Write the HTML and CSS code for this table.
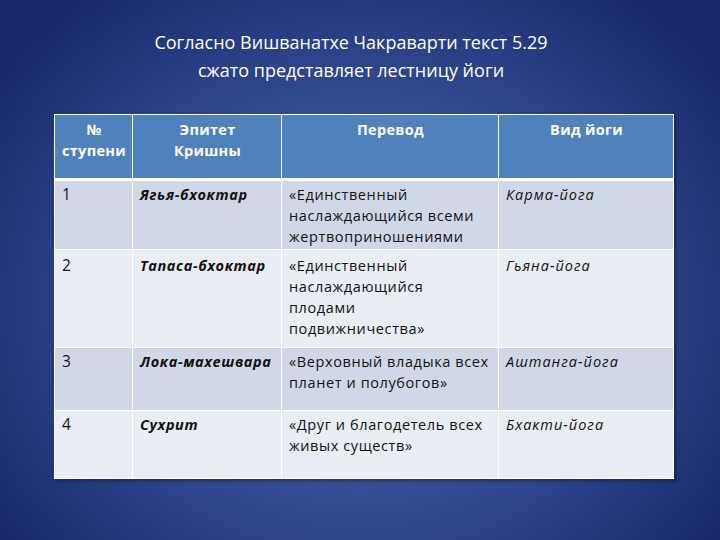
FILE: index.html
```html
<!DOCTYPE html>
<html lang="ru">
<head>
<meta charset="utf-8">
<link rel="stylesheet" href="styles.css">
</head>
<body>
<div class="slide">
  <h1 class="title">Согласно Вишванатхе Чакраварти текст 5.29<br>сжато представляет лестницу йоги</h1>
  <table class="grid">
    <colgroup>
      <col class="c1"><col class="c2"><col class="c3"><col class="c4">
    </colgroup>
    <thead>
      <tr class="head">
        <th>№<br>ступени</th>
        <th>Эпитет<br>Кришны</th>
        <th>Перевод</th>
        <th>Вид йоги</th>
      </tr>
    </thead>
    <tbody>
      <tr class="r1 dark">
        <td class="num">1</td>
        <td class="epi">Ягья-бхоктар</td>
        <td>«Единственный наслаждающийся всеми жертвоприношениями</td>
        <td class="kind">Карма-йога</td>
      </tr>
      <tr class="r2 light">
        <td class="num">2</td>
        <td class="epi">Тапаса-бхоктар</td>
        <td>«Единственный<br>наслаждающийся<br>плодами<br>подвижничества»</td>
        <td class="kind">Гьяна-йога</td>
      </tr>
      <tr class="r3 dark">
        <td class="num">3</td>
        <td class="epi">Лока-махешвара</td>
        <td>«Верховный владыка всех планет и полубогов»</td>
        <td class="kind">Аштанга-йога</td>
      </tr>
      <tr class="r4 light">
        <td class="num">4</td>
        <td class="epi">Сухрит</td>
        <td>«Друг и благодетель всех живых существ»</td>
        <td class="kind">Бхакти-йога</td>
      </tr>
    </tbody>
  </table>
</div>
</body>
</html>
```

FILE: styles.css
```css
html, body {
  margin: 0;
  padding: 0;
}

.slide {
  width: 720px;
  height: 540px;
  overflow: hidden;
  box-sizing: border-box;
  padding-top: 28px;
  background: radial-gradient(ellipse 62% 72% at 50% 56%, #4e67a9 0%, #3f579b 35%, #293e84 70%, #172969 100%);
  font-family: "Open Sans", "Noto Sans", sans-serif;
}

.title {
  margin: 0;
  padding-right: 18px;
  font-weight: normal;
  font-size: 18px;
  line-height: 28px;
  color: #ffffff;
  text-align: center;
}

.grid {
  margin: 30px 0 0 54px;
  width: 619px;
  border-collapse: collapse;
  table-layout: fixed;
  font-size: 14.5px;
  line-height: 21px;
  letter-spacing: 0.6px;
  color: #111111;
  box-shadow: 2px 2px 3px rgba(0, 0, 0, 0.35);
}

.c1 { width: 78px; }
.c2 { width: 149px; }
.c3 { width: 217px; }
.c4 { width: 175px; }

.grid th,
.grid td {
  border: 1px solid #ffffff;
  padding: 3px 6px 2px 7px;
  vertical-align: top;
  text-align: left;
}

.grid th {
  padding-top: 4px;
  background: #4f81bd;
  color: #ffffff;
  font-weight: bold;
  font-size: 14.5px;
  letter-spacing: 0.3px;
  text-align: center;
  border-bottom: 3px solid #ffffff;
}

.head { height: 65px; }
.r1 { height: 69px; }
.r2 { height: 98px; }
.r3 { height: 63px; }
.r4 { height: 68px; }

.r2 td { padding-top: 5px; }

.dark td { background: #d0d8e8; }
.light td { background: #e9edf4; }

.num {
  font-size: 15.5px;
}

.epi {
  font-weight: bold;
  font-style: italic;
  letter-spacing: 0.6px;
  white-space: nowrap;
}

.kind {
  font-style: italic;
  letter-spacing: 1px;
}
```
